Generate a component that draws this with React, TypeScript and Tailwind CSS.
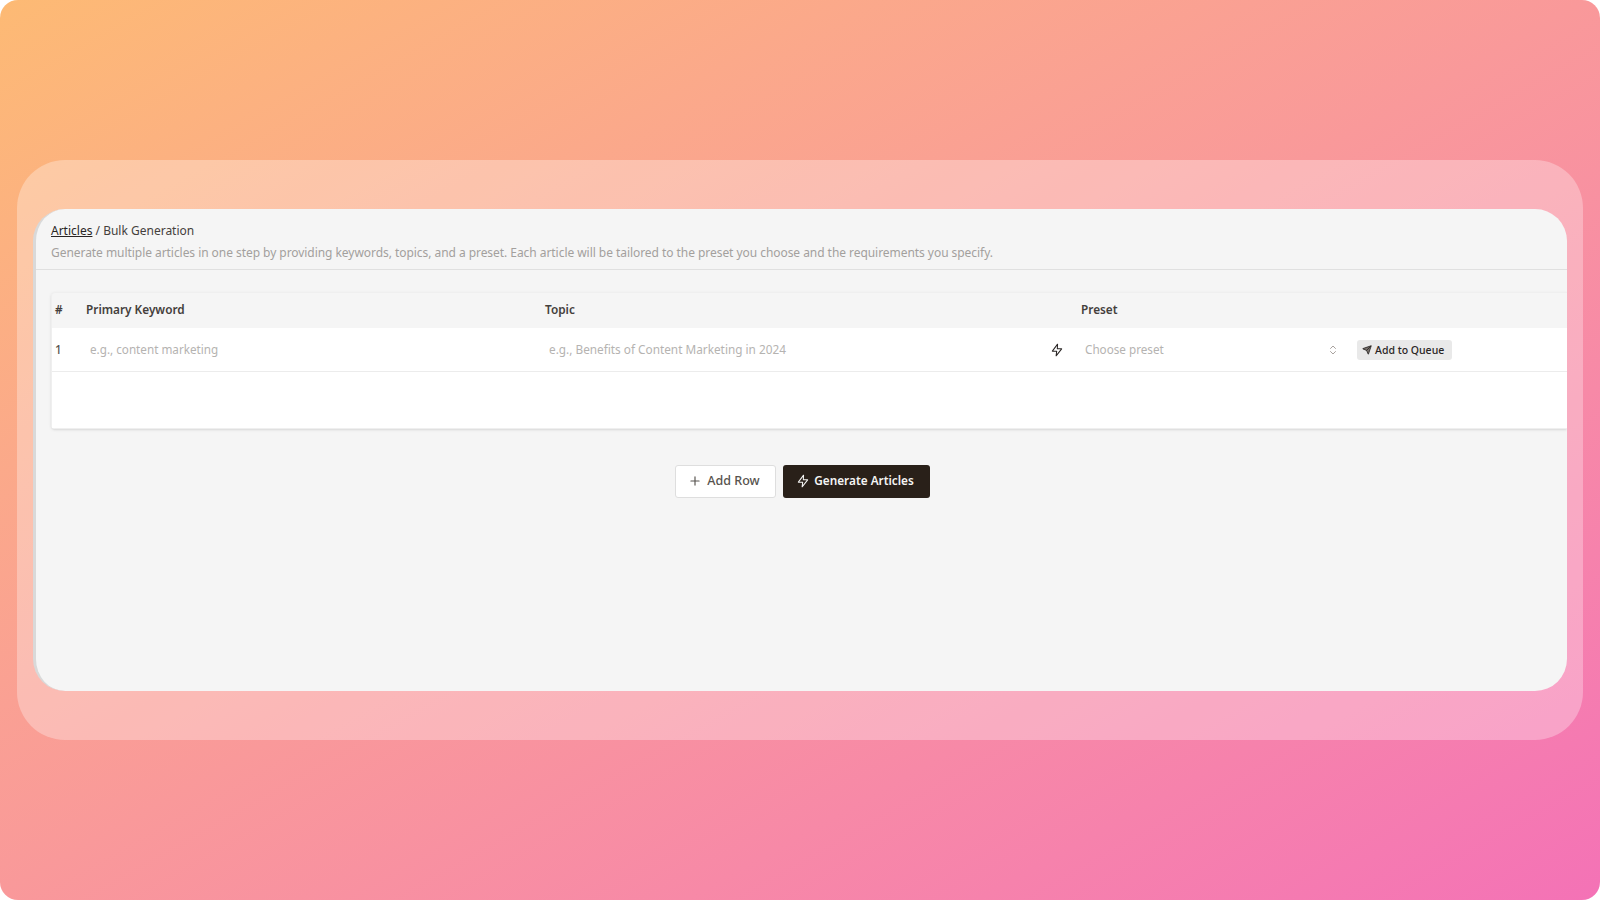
import { Plus, ChevronsUpDown, Send } from 'lucide-react';

const font = { fontFamily: '"Noto Sans", sans-serif' };

function Bolt({ className }: { className: string }) {
  return (
    <svg viewBox="0 0 24 24" fill="none" stroke="currentColor" strokeWidth={1.75} strokeLinejoin="round" strokeLinecap="round" className={className}>
      <polygon points="13 2 4 14 11.5 14 10.5 22 20 10 12.5 10 13 2" />
    </svg>
  );
}

function App() {
  return (
    <div
      className="h-[900px] w-[1600px] overflow-hidden rounded-[18px] bg-white"
      style={font}
    >
      <div className="flex h-full items-center bg-gradient-to-br from-[#fdba74] to-[#f472b6] px-[17px] pb-[1px]">
        <div className="w-full rounded-[48px] bg-white/30 px-[16px] py-[49px]">
          <div className="flex h-[482px] flex-col overflow-hidden rounded-[32px] border-l-[3px] border-[#d9d9d9] bg-[#f5f5f5]">
            {/* Breadcrumb and intro */}
            <div className="border-b border-[#e0e0e0] pl-[15px] pt-[12px] pb-[6px]">
              <div className="text-[12px] leading-[20px] text-[#44403c]">
                <span className="text-[#292524] underline">Articles</span> / Bulk Generation
              </div>
              <p className="mt-[2px] text-[12px] leading-[20px] tracking-[-0.05px] text-[#a3a09d]">
                Generate multiple articles in one step by providing keywords, topics, and a preset. Each article will be tailored to the preset you choose and the requirements you specify.
              </p>
            </div>

            {/* Rows */}
            <div className="ml-[15px] mt-[22px] rounded-l-[4px] border-l border-b border-t border-[#efefef] shadow-sm">
              <div className="grid h-[35px] grid-cols-[34px_459px_536px_1fr] items-center text-[11.8px] font-semibold text-[#44403c]">
                <span className="pl-[3px]">#</span>
                <span>Primary Keyword</span>
                <span>Topic</span>
                <span>Preset</span>
              </div>
              <div className="h-[100px] bg-white">
                <div className="grid h-[44px] grid-cols-[34px_459px_536px_1fr] items-center border-b border-[#ececec] pt-[1px] text-[11.7px]">
                  <span className="pl-[3px] font-medium text-[#57534e]">1</span>
                  <span className="pl-[4px] text-[#b5b3b1]">e.g., content marketing</span>
                  <div className="flex items-center justify-between pl-[4px] pr-[17px]">
                    <span className="text-[11.8px] text-[#b5b3b1]">e.g., Benefits of Content Marketing in 2024</span>
                    <Bolt className="h-[14px] w-[14px] text-[#292524]" />
                  </div>
                  <div className="flex items-center">
                    <span className="w-[246px] pl-[4px] text-[#b5b3b1]">Choose preset</span>
                    <ChevronsUpDown className="h-[12px] w-[12px] text-[#a8a29e]" />
                    <button className="ml-[18px] flex h-[20px] w-[95px] items-center gap-[3px] rounded-[3px] bg-[#e9e9e9] pl-[5px] text-[10.5px] font-medium text-[#292524]">
                      <Send className="h-[10px] w-[10px] fill-[#78716c]" />
                      <span className="pt-[2px]">Add to Queue</span>
                    </button>
                  </div>
                </div>
              </div>
            </div>

            {/* Actions */}
            <div className="mt-[36px] flex justify-center gap-[7px] pl-[1px]">
              <button className="flex h-[33px] w-[101px] items-center justify-center gap-[5px] rounded-[3px] border border-[#dedede] bg-white pr-[2px] text-[12.5px] font-medium text-[#57534e]">
                <Plus className="h-[14px] w-[14px]" />
                Add Row
              </button>
              <button className="flex h-[33px] w-[147px] items-center justify-center gap-[4px] rounded-[3px] bg-[#292019] pr-[2px] text-[11.8px] font-semibold text-[#f5f5f4]">
                <Bolt className="h-[14px] w-[14px]" />
                Generate Articles
              </button>
            </div>
          </div>
        </div>
      </div>
    </div>
  );
}

export default App;
